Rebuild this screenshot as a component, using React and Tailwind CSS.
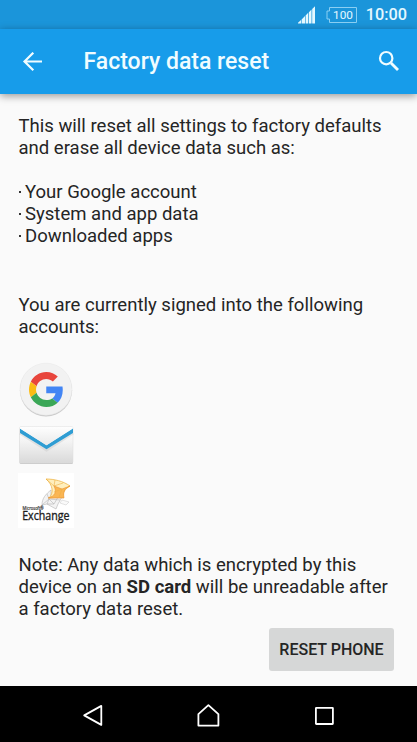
const resetItems = ['Your Google account', 'System and app data', 'Downloaded apps'];

const StatusBar = () => (
  <div className="flex h-[29px] items-center justify-end bg-[#1b95da] pr-[10px] text-[#e4f8ff]">
    <svg width="18" height="18" viewBox="0 0 18 18" fill="currentColor">
      <path d="M0 17.5V16.8L3 14V17.5ZM3.6 17.5V13.4L7 10V17.5ZM7.6 17.5V9.4L10.2 6.8V17.5ZM10.9 17.5V6.2L13.5 3.6V17.5ZM14.2 17.5V3L17 .2V17.5Z" />
    </svg>
    <svg className="ml-[9px]" width="33" height="18" viewBox="0 0 33 18">
      <path d="M4.5 1.5H31.5V16.5H4.5V13H2V5H4.5Z" fill="none" stroke="#8bcff3" />
      <text x="18" y="13" textAnchor="middle" fill="currentColor" fontSize="11.8" fontFamily="Roboto, sans-serif">
        100
      </text>
    </svg>
    <span className="ml-[8px] pt-px text-[16.3px] font-medium leading-none">10:00</span>
  </div>
);

const AppBar = () => (
  <header className="relative flex h-[65px] items-center bg-[#179cea] text-[#f0fcff] shadow-[0_2px_8px_rgba(0,0,0,0.4)]">
    <svg className="ml-[22px]" width="21" height="20" viewBox="0 0 21 20" fill="none" stroke="currentColor" strokeWidth="2.2">
      <path d="M20 9.5H2.5M11.3 .7L2.5 9.5L11.3 18.3" />
    </svg>
    <h1 className="ml-[40.5px] pt-[2px] text-[23px] font-medium">Factory data reset</h1>
    <svg className="mr-[17px] mb-px ml-auto" width="22" height="22" viewBox="0 0 22 22" fill="none" stroke="currentColor">
      <circle cx="8.2" cy="8.2" r="6.2" strokeWidth="2.2" />
      <path d="M13 13L20 20" strokeWidth="2.8" />
    </svg>
  </header>
);

const GoogleIcon = () => (
  <svg width="56" height="56" viewBox="0 0 56 56">
    <circle cx="28" cy="28.3" r="26.1" fill="#c9c9c9" />
    <circle cx="28" cy="27.2" r="26" fill="#f2f2f2" stroke="#e6e6e6" strokeWidth=".5" />
    <svg x="11" y="10" width="34.5" height="35" viewBox="0 0 48 48" preserveAspectRatio="none">
      <path fill="#e8453c" d="M24 9.5c3.54 0 6.71 1.22 9.21 3.6l6.85-6.85C35.9 2.38 30.47 0 24 0 14.62 0 6.51 5.38 2.56 13.22l7.98 6.19C12.43 13.72 17.74 9.5 24 9.5z" />
      <path fill="#4285f4" d="M46.98 24.55c0-1.57-.15-3.09-.38-4.55H24v9.02h12.94c-.58 2.96-2.26 5.48-4.78 7.18l7.73 6c4.51-4.18 7.09-10.36 7.09-17.65z" />
      <path fill="#fbbc14" d="M10.53 28.59c-.48-1.45-.76-2.99-.76-4.59s.27-3.14.76-4.59l-7.98-6.19C.92 16.46 0 20.12 0 24c0 3.88.92 7.54 2.56 10.78l7.97-6.19z" />
      <path fill="#3ba757" d="M24 48c6.48 0 11.93-2.13 15.89-5.81l-7.73-6c-2.15 1.45-4.92 2.3-8.16 2.3-6.26 0-11.57-4.22-13.47-9.91l-7.98 6.19C6.51 42.62 14.62 48 24 48z" />
    </svg>
  </svg>
);

const MailIcon = () => (
  <svg width="56" height="55" viewBox="0 0 56 55">
    <defs>
      <linearGradient id="mail" x1="0" y1="0" x2="0" y2="1">
        <stop offset="0" stopColor="#fff" />
        <stop offset=".4" stopColor="#f4f4f4" />
        <stop offset="1" stopColor="#d9d9d9" />
      </linearGradient>
      <linearGradient id="flap" x1="0" y1="0" x2="0" y2="1">
        <stop offset="0" stopColor="#fefefe" />
        <stop offset="1" stopColor="#e9e9e9" />
      </linearGradient>
    </defs>
    <rect x="1.5" y="9.5" width="53.5" height="36.5" rx="1.5" fill="#c8c8c8" />
    <rect x="1.5" y="8.5" width="53.5" height="36.5" rx="1.5" fill="url(#mail)" stroke="#dedede" strokeWidth=".5" />
    <path d="M2 15L28.5 32L55 15" fill="none" stroke="#bbb" strokeOpacity=".3" strokeWidth="3" />
    <path d="M2 10.5V15L28.5 31.2L55 15V10.5L28.5 27.2Z" fill="#2f9dd3" />
    <path d="M2 9H54.5V10.5L28.5 27.2L2 10.5Z" fill="url(#flap)" />
  </svg>
);

const ExchangeIcon = () => (
  <svg width="56" height="55" viewBox="0 0 56 55" fontFamily="Open Sans, sans-serif">
    <rect width="56" height="55" fill="#fff" />
    <g fill="#f3f3f3" stroke="#b3b3b3" strokeWidth=".6">
      <path d="M33 17C28 21 24 25 24 32L29 31L38 36L40 31L44 24L33 24Z" />
      <path d="M29 21L31 26L29 31M24 32L31 26L36 31L40 24M31 26L42 27M36 31L29 31" fill="none" />
      <path d="M44 27L51 29L48 32L42 30Z" fill="#fafafa" stroke="#d0d0d0" />
    </g>
    <path d="M28 6C36 6 45 8 52 13C47 16 45 19 45 24L31 25C36 20 35 12 28 6Z" fill="#ffefbd" stroke="#efb649" strokeWidth=".8" />
    <path d="M52 13C46 16 45 19 46 25L30 25C37 23 39 19 36 13L44 16Z" fill="#fab653" stroke="#ea922f" strokeWidth=".6" />
    <path d="M28 6L36 13L45 10M37 7L36 13M36 19L44 16L41 24" fill="none" stroke="#edae43" strokeWidth=".6" />
    <text transform="translate(4.6 36.8) scale(.84 1)" fontSize="4.8" fill="#222" stroke="#222" strokeWidth=".15">
      Microsoft®
    </text>
    <text transform="translate(4.2 46.8) scale(.9 1)" fontSize="11.8" fill="#1c1c1c" stroke="#1c1c1c" strokeWidth=".35">
      Exchange
    </text>
  </svg>
);

const NavBar = () => (
  <nav className="flex h-14 items-center bg-black px-[82px] pt-[2px] text-white">
    <svg width="22" height="24" viewBox="0 0 22 24" fill="none" stroke="currentColor" strokeWidth="1.8" strokeLinejoin="round">
      <path d="M19.3 2.9V21.9L2.2 12.4Z" />
    </svg>
    <svg className="ml-[92px]" width="24" height="26" viewBox="0 0 24 26" fill="none" stroke="currentColor" strokeWidth="1.8" strokeLinejoin="round">
      <path d="M2.4 12.2L12.4 3.2L22.4 12.2V23.6H2.4Z" />
    </svg>
    <svg className="ml-[94px]" width="20" height="20" viewBox="0 0 20 20" fill="none" stroke="currentColor" strokeWidth="1.8">
      <rect x="1.9" y="2.8" width="17" height="16.2" rx=".4" />
    </svg>
  </nav>
);

const App = () => {
  return (
    <div className="flex h-[742px] w-[417px] flex-col overflow-hidden bg-[#fafafa] font-['Roboto',sans-serif] text-[#252525]">
      <StatusBar />
      <AppBar />

      <main className="flex flex-1 flex-col px-[18px] pt-[21px] text-[18.55px] leading-[22px]">
        <p className="pl-[0.5px] whitespace-nowrap">
          This will reset all settings to factory defaults
          <br />
          and erase all device data such as:
        </p>

        <ul className="mt-[22px]">
          {resetItems.map((item) => (
            <li key={item} className="flex items-center">
              <span className="mr-[4px] ml-px h-[2px] w-[2px] bg-[#333]" />
              {item}
            </li>
          ))}
        </ul>

        <p className="mt-[47px] pl-[0.5px] whitespace-nowrap">
          You are currently signed into the following
          <br />
          accounts:
        </p>

        {/* Signed in accounts */}
        <div className="mt-[24px] flex flex-col">
          <GoogleIcon />
          <MailIcon />
          <ExchangeIcon />
        </div>

        <p className="mt-[26px] pl-[0.5px] whitespace-nowrap">
          Note: Any data which is encrypted by this
          <br />
          device on an <b>SD card</b> will be unreadable after
          <br />a factory data reset.
        </p>

        <button className="mt-2 mr-[5px] h-[43px] w-[125px] self-end rounded-[3px] bg-[#d6d7d7] text-[16px] font-medium whitespace-nowrap">
          RESET PHONE
        </button>
      </main>

      <NavBar />
    </div>
  );
};

export default App;
